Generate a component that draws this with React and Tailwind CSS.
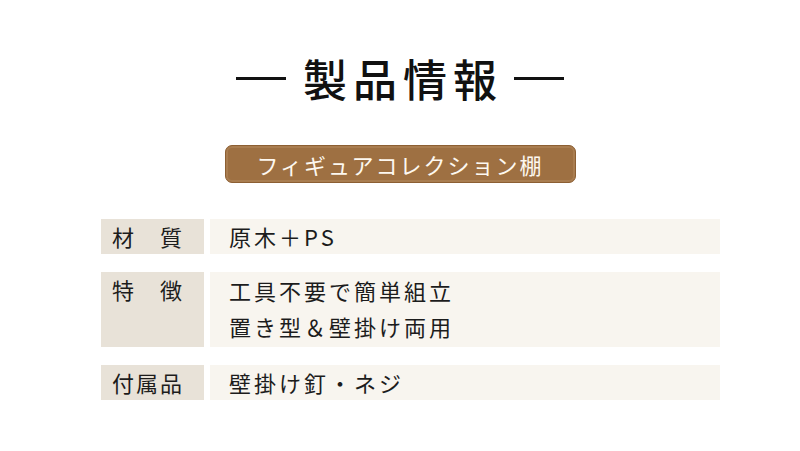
const jp = { fontFamily: '"Noto Sans CJK JP", "Noto Sans", sans-serif' }

const rows = [
  { label: '材　質', values: ['原木＋PS'] },
  { label: '特　徴', values: ['工具不要で簡単組立', '置き型＆壁掛け両用'] },
  { label: '付属品', values: ['壁掛け釘・ネジ'] },
]

function Row({ label, values }) {
  return (
    <div className="flex gap-[6px]">
      <div className="w-[103px] shrink-0 bg-[#e8e2d8] pl-[11px] text-[22px] leading-[35px] tracking-[2px] text-[#1c1c1c]">
        {label}
      </div>
      <div className="flex-1 bg-[#f8f5ef] pl-[19px] text-[22px] leading-[35px] tracking-[3px] text-[#1c1c1c]">
        {values.map(v => (
          <div key={v} className={values.length > 1 ? 'leading-[36px]' : ''}>{v}</div>
        ))}
        {values.length > 1 && <div className="h-[3px]" />}
      </div>
    </div>
  )
}

export default function App() {
  return (
    <div className="w-[800px] h-[451px] bg-white overflow-hidden" style={jp}>
      <div className="flex items-center justify-center gap-[17px] pt-[52px]">
        <div className="w-[50px] h-[3px] bg-[#111]" />
        <h1 className="text-[44px] leading-[52px] font-medium tracking-[6px] mr-[-6px] text-[#111]">製品情報</h1>
        <div className="w-[50px] h-[3px] bg-[#111]" />
      </div>

      <div className="flex justify-center mt-[41px]">
        <div className="w-[351px] h-[38px] rounded-[7px] bg-[#9e7042] border border-[#8c5f33] shadow-[inset_0_0_0_2px_rgba(190,150,105,0.35)] flex items-center justify-center text-[22px] tracking-[2px] text-[#fdf8f0]">
          フィギュアコレクション棚
        </div>
      </div>

      <div className="mx-[101px] w-[619px] mt-[36px] flex flex-col gap-[18px]">
        {rows.map(r => (
          <Row key={r.label} {...r} />
        ))}
      </div>
    </div>
  )
}
